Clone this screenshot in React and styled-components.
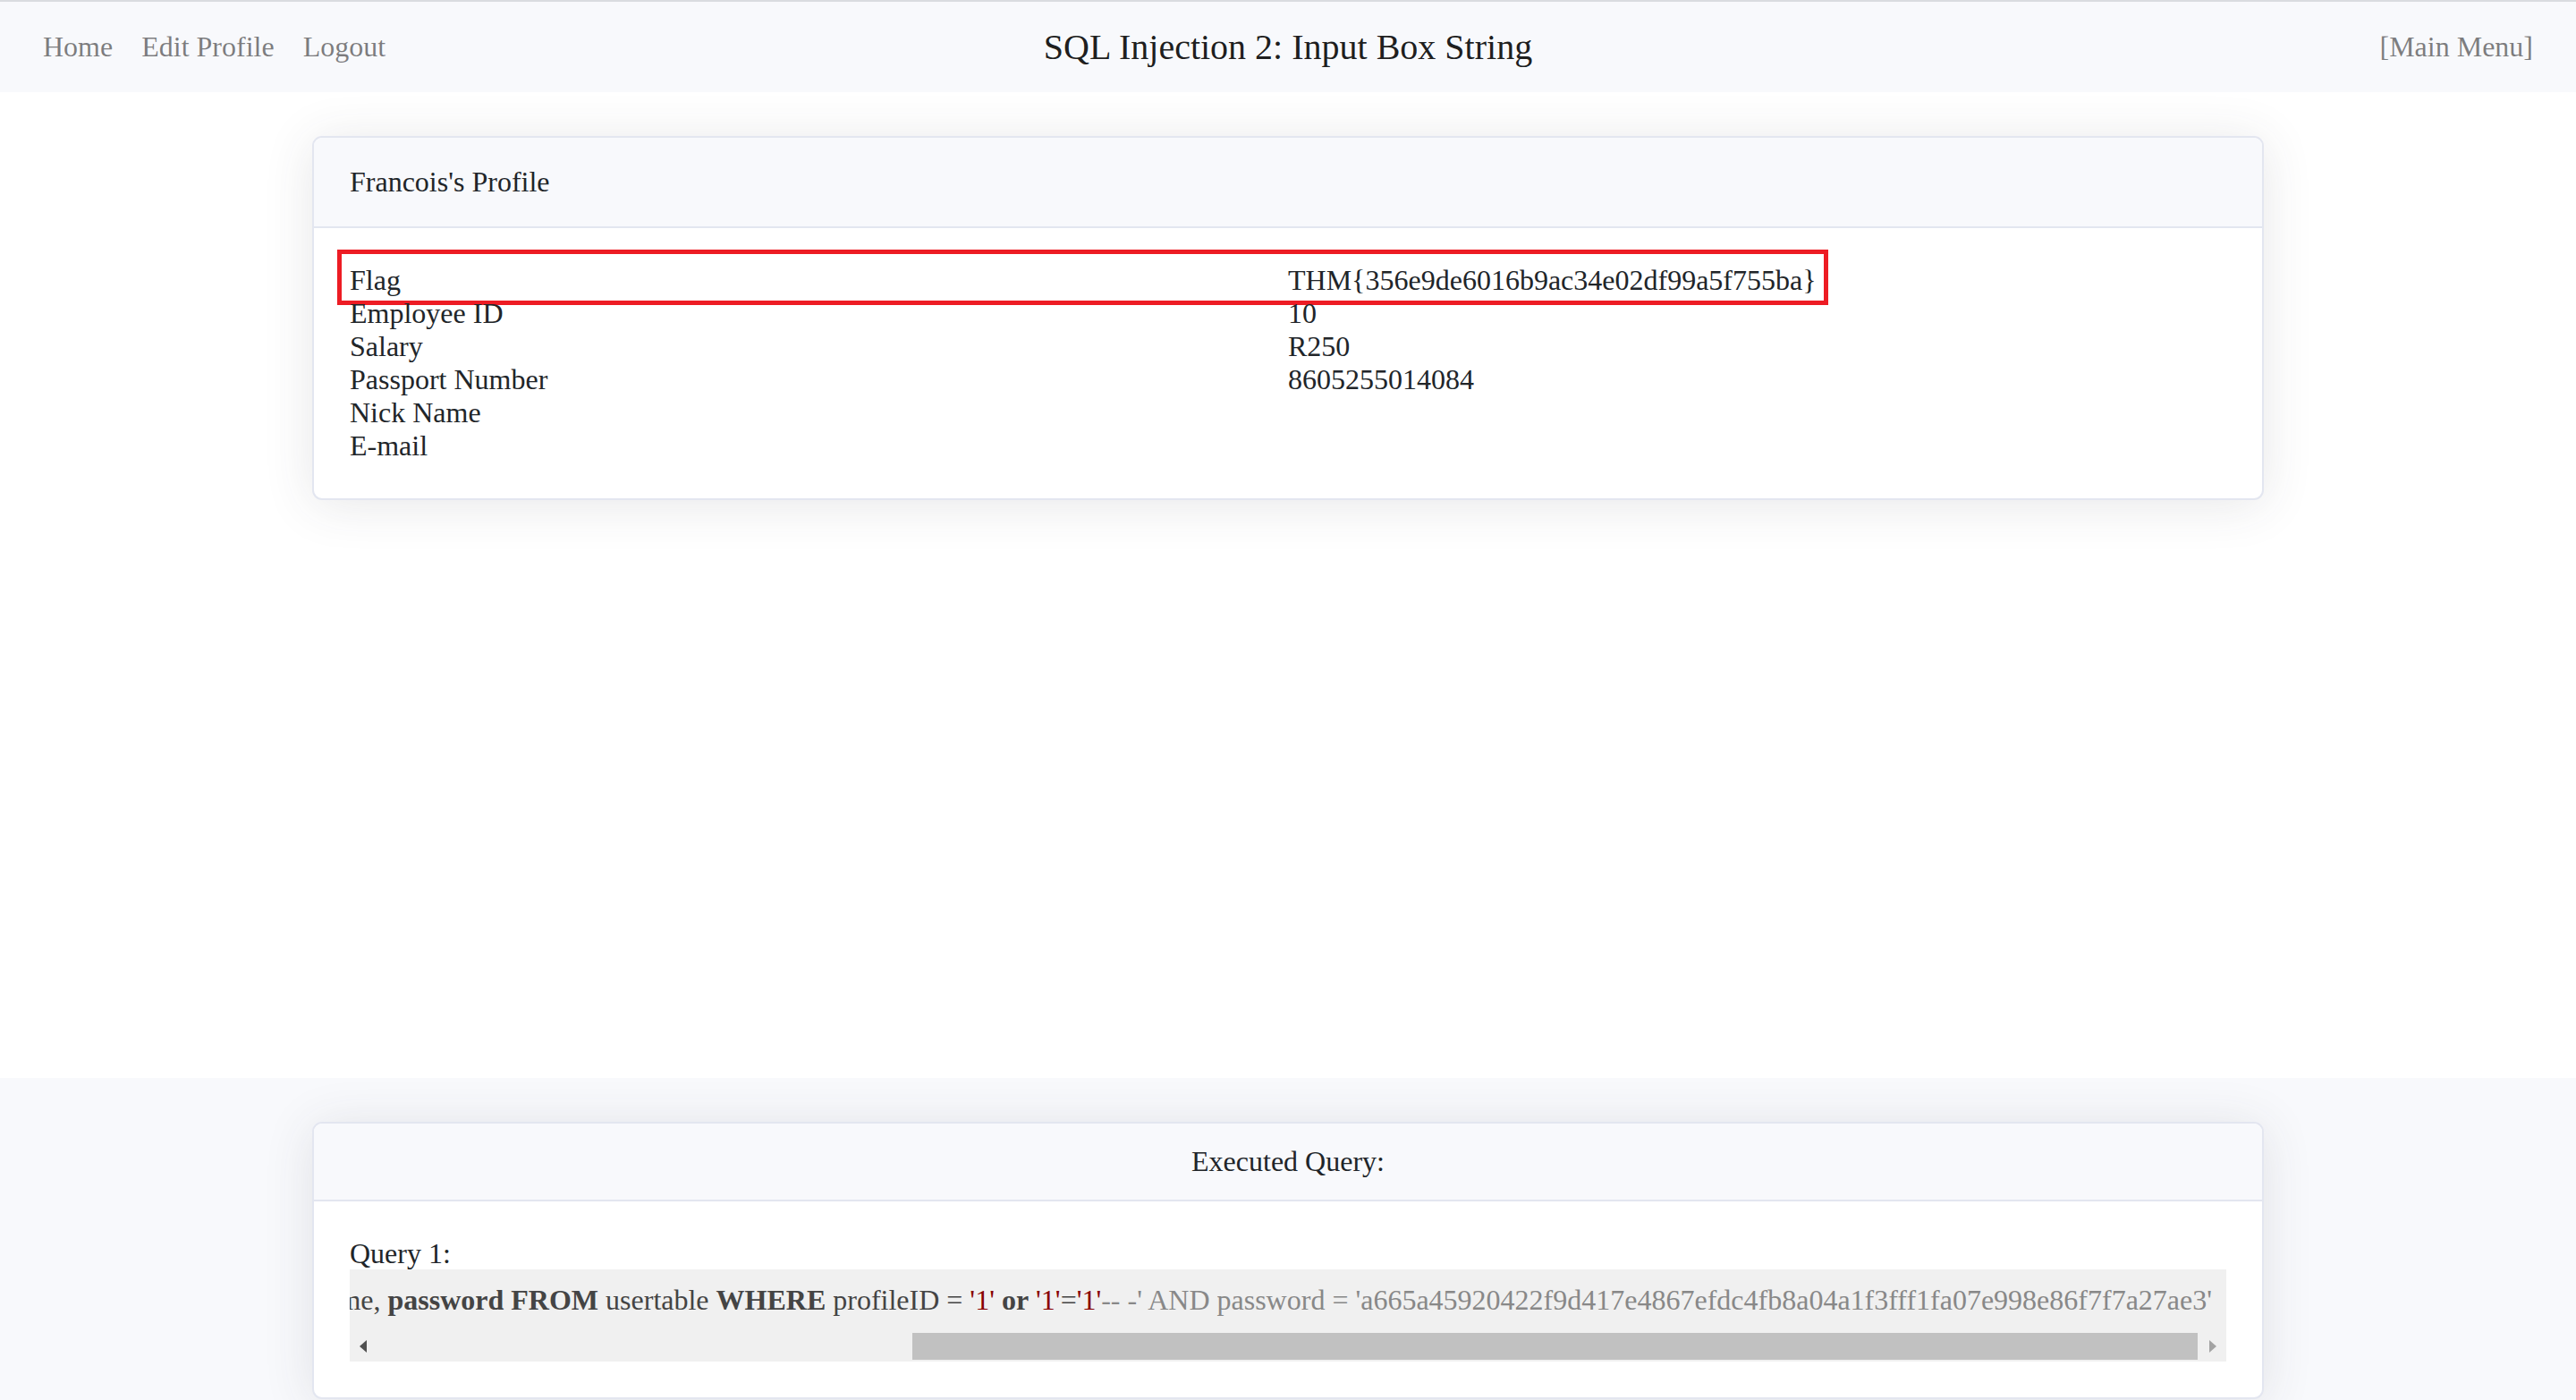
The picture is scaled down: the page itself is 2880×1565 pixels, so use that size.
import React from "react";
import styled, { createGlobalStyle } from "styled-components";

const GlobalStyle = createGlobalStyle`
  html, body {
    margin: 0;
    padding: 0;
    background: #ffffff;
  }
  body {
    font-family: "Liberation Serif", "Times New Roman", serif;
    color: #212529;
  }
  * { box-sizing: border-box; }
`;

const Nav = styled.nav`
  display: grid;
  grid-template-columns: 1fr auto 1fr;
  align-items: center;
  height: 103px;
  padding: 0 32px;
  background: #f8f9fc;
  border-top: 2px solid #dadce0;
`;

const NavLinks = styled.div`
  display: flex;
  justify-self: start;
`;

const NavLink = styled.a`
  display: block;
  padding: 0 16px;
  font-size: 32px;
  line-height: 37px;
  color: rgba(0, 0, 0, 0.5);
  text-decoration: none;
  cursor: pointer;
`;

const MenuLink = styled(NavLink)`
  justify-self: end;
`;

const Brand = styled.div`
  font-size: 40px;
  line-height: 46px;
  color: rgba(0, 0, 0, 0.9);
`;

const Main = styled.main`
  min-height: 1102px;
  padding-top: 49px;
  background: #ffffff;
`;

const Footer = styled.footer`
  background: #f8f9fc;
  padding: 49px 0 48px;
`;

const Card = styled.section`
  width: 2182px;
  margin: 0 auto;
  background: #ffffff;
  border: 2px solid #e3e6f0;
  border-radius: 11px;
  box-shadow: 0 5px 56px rgba(58, 59, 69, 0.12);
`;

const CardHeader = styled.div`
  padding: 24px 40px;
  background: #f8f9fc;
  border-bottom: 2px solid #e3e6f0;
  border-radius: 9px 9px 0 0;
  font-size: 32px;
  line-height: ${(p) => p.$lineHeight || "37px"};
  text-align: ${(p) => (p.$center ? "center" : "left")};
  color: #212529;
`;

const CardBody = styled.div`
  padding: 40px;
`;

const InfoRow = styled.div`
  position: relative;
  display: grid;
  grid-template-columns: 1fr 1fr;
  font-size: 32px;
  line-height: 37px;
  color: #212529;
`;

const Highlight = styled.span`
  position: absolute;
  top: -16px;
  bottom: -9px;
  left: -14px;
  right: 445px;
  border: 5px solid #ed1c24;
  pointer-events: none;
`;

const QueryLabel = styled.div`
  font-size: 32px;
  line-height: 36px;
  color: #212529;
`;

const CodeBlock = styled.div`
  background: #f0f0f0;
  color: #444444;
`;

const CodeViewport = styled.div`
  display: flex;
  justify-content: flex-end;
  overflow: hidden;
  padding: 16px 16px 18px;
  font-size: 32px;
  line-height: 37px;
  white-space: pre;
`;

const Code = styled.code`
  font-family: "Liberation Serif", "Times New Roman", serif;
  flex: none;
`;

const Kw = styled.span`
  font-weight: bold;
`;

const Str = styled.span`
  color: #880000;
`;

const Cmt = styled.span`
  color: #888888;
`;

const ScrollBar = styled.div`
  display: flex;
  height: 32px;
  padding-bottom: 2px;
  background: #f0f0f0;
`;

const ScrollButton = styled.div`
  width: 30px;
  height: 30px;
  display: flex;
  align-items: center;
  justify-content: center;
  color: ${(p) => (p.$disabled ? "#a3a3a3" : "#505050")};
`;

const Track = styled.div`
  flex: 1;
  display: flex;
  height: 30px;
`;

const Thumb = styled.div`
  margin-left: 29.4%;
  width: 70.5%;
  height: 100%;
  background: #c1c1c1;
`;

const Arrow = ({ dir }) => (
  <svg width="8" height="14" viewBox="0 0 8 14" fill="currentColor">
    {dir === "left" ? (
      <polygon points="8,0 8,14 0,7" />
    ) : (
      <polygon points="0,0 8,7 0,14" />
    )}
  </svg>
);

const profile = [
  ["Flag", "THM{356e9de6016b9ac34e02df99a5f755ba}", true],
  ["Employee ID", "10"],
  ["Salary", "R250"],
  ["Passport Number", "8605255014084"],
  ["Nick Name", ""],
  ["E-mail", ""],
];

export default function App() {
  return (
    <>
      <GlobalStyle />
      <Nav>
        <NavLinks>
          <NavLink>Home</NavLink>
          <NavLink>Edit Profile</NavLink>
          <NavLink>Logout</NavLink>
        </NavLinks>
        <Brand>SQL Injection 2: Input Box String</Brand>
        <MenuLink>[Main Menu]</MenuLink>
      </Nav>

      <Main>
        <Card>
          <CardHeader $lineHeight="51px">Francois's Profile</CardHeader>
          <CardBody>
            {profile.map(([label, value, marked]) => (
              <InfoRow key={label}>
                <div>{label}</div>
                <div>{value}</div>
                {marked && <Highlight />}
              </InfoRow>
            ))}
          </CardBody>
        </Card>
      </Main>

      <Footer>
        <Card>
          <CardHeader $center>Executed Query:</CardHeader>
          <CardBody>
            <QueryLabel>Query 1:</QueryLabel>
            <CodeBlock>
              <CodeViewport>
                <Code>
                  <Kw>SELECT</Kw> uid, name, profileID, salary, passportNr, email, nickName, <Kw>password</Kw> <Kw>FROM</Kw> usertable <Kw>WHERE</Kw> profileID = <Str>'1'</Str> <Kw>or</Kw> <Str>'1'</Str>=<Str>'1'</Str>
                  <Cmt>-- -' AND password = 'a665a45920422f9d417e4867efdc4fb8a04a1f3fff1fa07e998e86f7f7a27ae3'</Cmt>
                </Code>
              </CodeViewport>
              <ScrollBar>
                <ScrollButton>
                  <Arrow dir="left" />
                </ScrollButton>
                <Track>
                  <Thumb />
                </Track>
                <ScrollButton $disabled>
                  <Arrow dir="right" />
                </ScrollButton>
              </ScrollBar>
            </CodeBlock>
          </CardBody>
        </Card>
      </Footer>
    </>
  );
}
